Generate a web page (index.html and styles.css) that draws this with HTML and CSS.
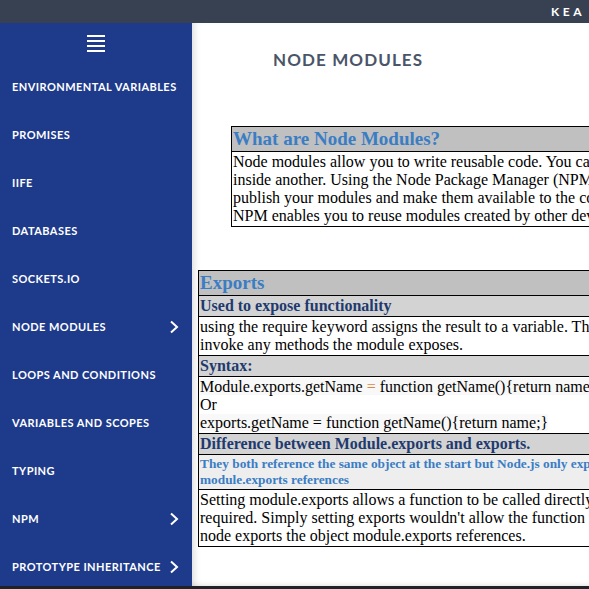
FILE: index.html
```html
<!DOCTYPE html>
<html lang="en">
<head>
<meta charset="utf-8">
<title>Node Modules</title>
<link rel="stylesheet" href="styles.css">
</head>
<body>
<header class="topbar"><span class="brand">KEA</span></header>
<div class="layout">
  <nav class="sidebar">
    <div class="menu-toggle">
      <span class="bars"><i></i><i></i><i></i><i></i></span>
    </div>
    <ul class="nav-list">
      <li class="nav-item">Environmental Variables</li>
      <li class="nav-item">Promises</li>
      <li class="nav-item">IIFE</li>
      <li class="nav-item">Databases</li>
      <li class="nav-item">Sockets.io</li>
      <li class="nav-item">Node Modules <svg class="chev" viewBox="0 0 10 14" width="10" height="14"><polyline points="2,1.5 8,7 2,12.5" fill="none" stroke="#fff" stroke-width="2"/></svg></li>
      <li class="nav-item">Loops and Conditions</li>
      <li class="nav-item">Variables and Scopes</li>
      <li class="nav-item">Typing</li>
      <li class="nav-item">NPM <svg class="chev" viewBox="0 0 10 14" width="10" height="14"><polyline points="2,1.5 8,7 2,12.5" fill="none" stroke="#fff" stroke-width="2"/></svg></li>
      <li class="nav-item">Prototype Inheritance <svg class="chev" viewBox="0 0 10 14" width="10" height="14"><polyline points="2,1.5 8,7 2,12.5" fill="none" stroke="#fff" stroke-width="2"/></svg></li>
    </ul>
  </nav>
  <main class="main">
    <h1 class="page-title">Node Modules</h1>
    <table class="info intro">
      <tr><th class="head">What are Node Modules?</th></tr>
      <tr><td class="body">Node modules allow you to write reusable code. You can nest them one inside another. Using the Node Package Manager (NPM), you can easily publish your modules and make them available to the community online. NPM enables you to reuse modules created by other developers.</td></tr>
    </table>
    <table class="info exports">
      <tr><th class="head">Exports</th></tr>
      <tr><td class="sub">Used to expose functionality</td></tr>
      <tr><td class="body">using the require keyword assigns the result to a variable. This allows you to easily invoke any methods the module exposes.</td></tr>
      <tr><td class="sub">Syntax:</td></tr>
      <tr><td class="body code"><span class="cl">Module.exports.getName <span class="op">=</span> function getName(){return name;}</span><br>Or<br><span class="cl">exports.getName = function getName(){return name;}</span></td></tr>
      <tr><td class="sub big">Difference between Module.exports and exports.</td></tr>
      <tr><td class="note">They both reference the same object at the start but Node.js only exports the object that the module.exports references</td></tr>
      <tr><td class="body">Setting module.exports allows a function to be called directly when the module is required. Simply setting exports wouldn't allow the function to be exported because node exports the object module.exports references.</td></tr>
    </table>
  </main>
</div>
<footer class="bottombar"></footer>
</body>
</html>
```
FILE: styles.css
```css
* { box-sizing: border-box; }
html, body { margin: 0; padding: 0; }
body {
  width: 589px;
  height: 589px;
  overflow: hidden;
  display: flex;
  flex-direction: column;
  background: #fff;
}
.topbar {
  height: 23px;
  flex: none;
  background: #374151;
  display: flex;
  align-items: center;
  justify-content: flex-end;
  padding-right: 4px;
}
.brand {
  font-family: "Lato", sans-serif;
  font-weight: 700;
  font-size: 12px;
  letter-spacing: 3.5px;
  color: #fff;
}
.layout {
  flex: 1;
  display: flex;
  min-height: 0;
}
.sidebar {
  width: 192px;
  flex: none;
  background: #1e3a8a;
  overflow: hidden;
}
.menu-toggle {
  height: 40px;
  display: flex;
  align-items: center;
  justify-content: center;
}
.bars {
  display: flex;
  flex-direction: column;
  gap: 3px;
  width: 18px;
}
.bars i {
  display: block;
  height: 2px;
  background: #fff;
}
.nav-list {
  list-style: none;
  margin: 0;
  padding: 0;
}
.nav-item {
  height: 48px;
  display: flex;
  align-items: center;
  justify-content: space-between;
  padding: 0 13px 1px 12px;
  font-family: "Lato", sans-serif;
  font-weight: 700;
  font-size: 11px;
  letter-spacing: 0.45px;
  text-transform: uppercase;
  color: #fff;
}
.chev { flex: none; }
.main {
  flex: 1;
  min-width: 0;
  overflow: hidden;
  padding: 25px 0 0 6px;
  box-shadow: inset 7px 0 8px -6px rgba(0,0,0,0.18), inset 0 -6px 6px -6px rgba(0,0,0,0.15);
}
.page-title {
  margin: 0 0 54px 75px;
  font-family: "Lato", sans-serif;
  font-weight: 700;
  font-size: 17px;
  line-height: 24px;
  letter-spacing: 1.1px;
  text-transform: uppercase;
  color: #4a5568;
  white-space: nowrap;
}
.info {
  border-collapse: collapse;
  border: 1px solid #000;
  font-family: "Liberation Serif", serif;
  font-size: 16px;
  color: #000;
}
.info th, .info td {
  border: 1px solid #000;
  padding: 1px 1px;
  text-align: left;
  vertical-align: top;
}
.intro {
  width: 480px;
  margin-left: 33px;
  margin-bottom: 43px;
}
.exports {
  width: 560px;
}
.head {
  background: #c0c0c0;
  color: #3b7dc4;
  font-size: 19px;
  font-weight: 700;
  line-height: 22px;
}
.sub {
  background: #d3d3d3;
  color: #1e3a6e;
  font-weight: 700;
}
.sub.big { font-size: 16px; }
.note {
  background: #eeeeee;
  color: #3b7dc4;
  font-weight: 700;
  font-size: 13.33px;
  line-height: 16px;
  padding: 2px 1px 1px;
}
.cl { background: #f8f8f8; }
.op { color: #dd8844; }
.bottombar {
  height: 3px;
  flex: none;
  background: #1f2328;
}
```
